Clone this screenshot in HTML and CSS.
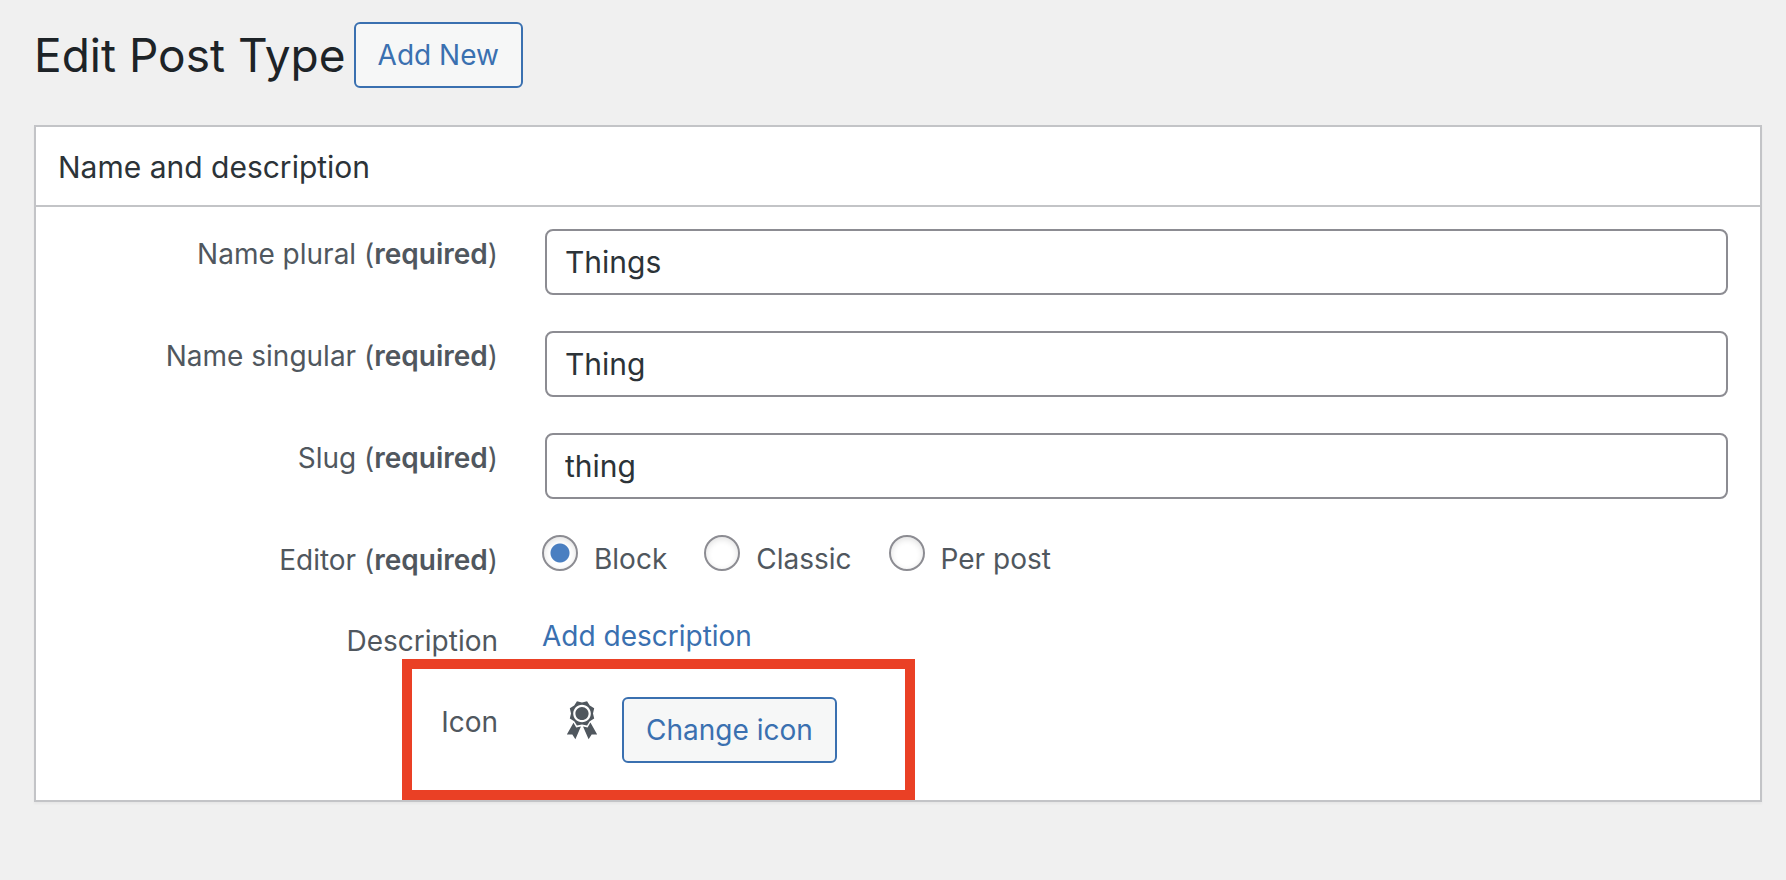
FILE: index.html
```html
<!DOCTYPE html>
<html lang="en">
<head>
  <meta charset="UTF-8" />
  <meta name="viewport" content="width=device-width, initial-scale=1.0"/>
  <title>Edit Post Type</title>
  <link rel="stylesheet" href="styles.css">
</head>
<body>
  <header class="page-header">
    <h1>Edit Post Type</h1>
    <button type="button" class="button">Add New</button>
  </header>

  <main class="postbox">
    <h2>Name and description</h2>

    <form class="fields">
      <div class="row">
        <label class="row-label" for="name-plural">Name plural (<strong>required</strong>)</label>
        <input class="text-input" type="text" id="name-plural" value="Things" required>
      </div>
      <div class="row">
        <label class="row-label" for="name-singular">Name singular (<strong>required</strong>)</label>
        <input class="text-input" type="text" id="name-singular" value="Thing" required>
      </div>
      <div class="row">
        <label class="row-label" for="slug">Slug (<strong>required</strong>)</label>
        <input class="text-input" type="text" id="slug" value="thing" required>
      </div>

      <div class="row" role="radiogroup" aria-labelledby="editor-label">
        <span class="row-label" id="editor-label">Editor (<strong>required</strong>)</span>
        <div class="radios">
          <label><input type="radio" name="editor" value="block" checked><span>Block</span></label>
          <label><input type="radio" name="editor" value="classic"><span>Classic</span></label>
          <label><input type="radio" name="editor" value="per-post"><span>Per post</span></label>
        </div>
      </div>

      <div class="row">
        <span class="row-label">Description</span>
        <div class="link-field"><a href="#">Add description</a></div>
      </div>

      <div class="row icon-row">
        <span class="row-label">Icon</span>
        <div class="icon-field">
          <svg class="award" viewBox="0 0 20 20" aria-hidden="true">
            <path d="M4.46 5.16L5 7.46l-.54 2.29 2.01 1.24L7.7 13l2.3-.54 2.3.54 1.23-2.01 2.01-1.24L15 7.46l.54-2.3-2-1.24-1.24-2.01-2.3.55-2.29-.54-1.25 2zm5.55 6.34c-2.21 0-4-1.79-4-4 0-2.2 1.79-4 4-4 2.2 0 4 1.8 4 4 0 2.21-1.8 4-4 4zm-.02-1C8.33 10.5 7 9.16 7 7.5c0-1.65 1.33-3 2.99-3S13 5.85 13 7.5c0 1.66-1.35 3-3.01 3zm3.84 1.1l-1.28 2.24-2.08-.47L13 19.2l1.4-2.2h2.5zm-7.7.07l1.25 2.25 2.13-.51L7 19.2 5.6 17H3.1z"/>
          </svg>
          <button type="button" class="button">Change icon</button>
        </div>
        <div class="highlight"></div>
      </div>
    </form>
  </main>
</body>
</html>
```
FILE: styles.css
```css
* {
  margin: 0;
  padding: 0;
  box-sizing: border-box;
}

body {
  font-family: Inter, "Liberation Sans", sans-serif;
  font-size: 28px;
  line-height: 40px;
  background: #f0f0f0;
  color: #50575e;
  padding: 22px 24px 40px 34px;
}

a {
  color: #3a70b0;
  text-decoration: none;
}
a:hover {
  color: #135e96;
}
strong {
  font-weight: 600;
}

/* Page title */
.page-header {
  display: flex;
  align-items: center;
  gap: 8px;
  margin-bottom: 37px;
}
h1 {
  font-size: 46px;
  line-height: 64px;
  font-weight: 400;
  color: #1d2327;
}

.button {
  height: 66px;
  padding: 0 22px;
  font-family: inherit;
  font-size: 28px;
  line-height: 40px;
  color: #3a70b0;
  background: #f6f7f7;
  border: 2px solid #3a70b0;
  border-radius: 6px;
  white-space: nowrap;
  cursor: pointer;
}
.button:hover {
  background: #f0f0f1;
}

/* Box */
.postbox {
  background: #fff;
  border: 2px solid #c3c4c7;
  box-shadow: 0 2px 2px rgba(0,0,0,0.04);
}
h2 {
  padding: 20px 22px 18px;
  font-size: 30px;
  line-height: 40px;
  font-weight: 400;
  color: #2c3338;
  border-bottom: 2px solid #c3c4c7;
}

/* Form rows */
.fields {
  display: flex;
  flex-direction: column;
  gap: 36px;
  padding: 22px 32px 37px 22px;
}
.row {
  display: grid;
  grid-template-columns: 440px minmax(0, 1fr);
  column-gap: 47px;
  align-items: start;
  min-height: 45px;
}
.row-label {
  padding-top: 5px;
  text-align: right;
}

.text-input {
  width: 100%;
  height: 66px;
  padding: 0 18px;
  font-family: inherit;
  font-size: 30px;
  line-height: 40px;
  color: #2c3338;
  background: #fff;
  border: 2px solid #8c8c92;
  border-radius: 8px;
}

.radios {
  display: flex;
  gap: 37px;
  margin-left: -3px;
}
.radios label {
  display: flex;
  align-items: flex-start;
  gap: 16px;
}
.radios span {
  padding-top: 4px;
}
.radios input {
  appearance: none;
  width: 36px;
  height: 36px;
  border: 2px solid #8c8c92;
  border-radius: 50%;
  background: #fff;
  box-shadow: inset 0 2px 6px rgba(0,0,0,0.12);
}
.radios input:checked {
  background: radial-gradient(circle, #4a7fc1 9px, transparent 10px);
}

.link-field {
  margin-left: -3px;
}

.icon-row {
  position: relative;
}
.icon-field {
  display: flex;
  align-items: flex-start;
  gap: 18px;
  padding-left: 15px;
}
.award {
  width: 44px;
  height: 44px;
  fill: #50575e;
}

/* Red frame round the icon row */
.highlight {
  position: absolute;
  top: -38px;
  bottom: -37px;
  left: 344px;
  width: 513px;
  border: 10px solid #ea4025;
  pointer-events: none;
}
```
